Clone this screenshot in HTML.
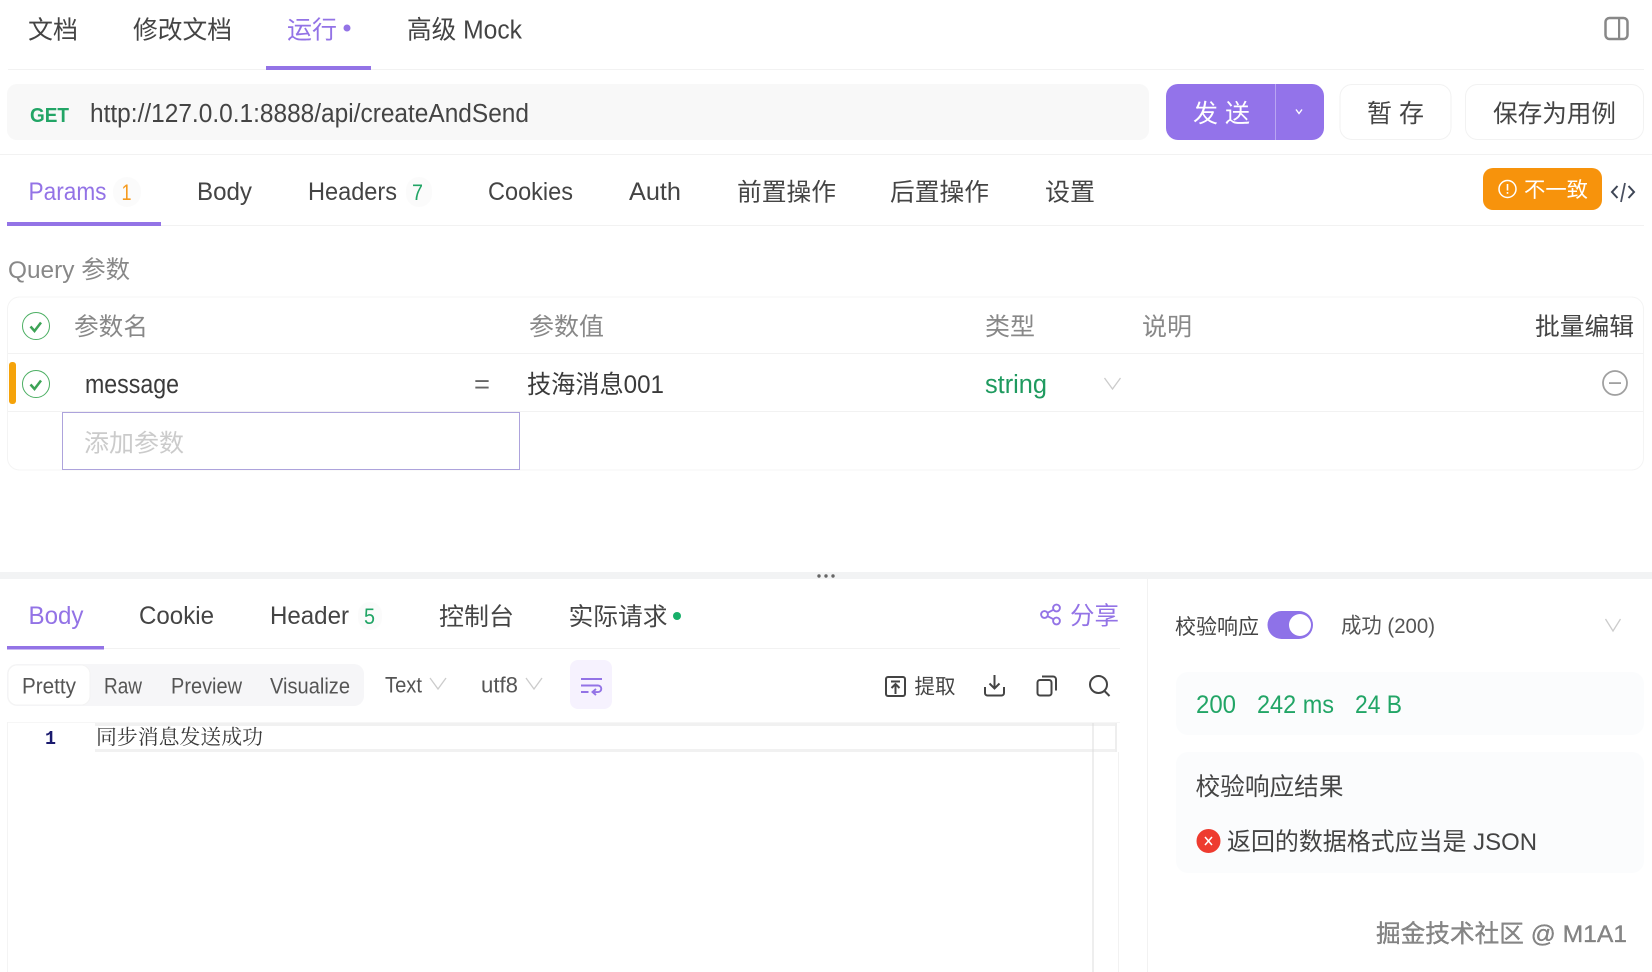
<!DOCTYPE html>
<html lang="zh"><head><meta charset="utf-8"><title>运行</title>
<style>
html,body{margin:0;padding:0;background:#fff;width:1652px;height:972px;overflow:hidden}
svg{display:block;position:absolute;left:0;top:0}
text{font-family:"Liberation Sans","Noto Sans CJK SC",sans-serif;fill:#444;white-space:pre}
.g{fill:#888}.p{fill:#9373e6}.gr{fill:#22a566}
</style></head><body>
<svg width="1652" height="972" viewBox="0 0 1652 972" xmlns="http://www.w3.org/2000/svg">
<rect width="1652" height="972" fill="#fff"/>

<!-- top tabs -->
<rect x="8" y="69" width="1636" height="1" fill="#f2f2f2"/>
<rect x="266" y="66" width="105" height="4" fill="#9373e6"/>
<g font-size="25">
<text x="28" y="38.500" textLength="50" lengthAdjust="spacingAndGlyphs">文档</text>
<text x="133" y="38.500" textLength="99" lengthAdjust="spacingAndGlyphs">修改文档</text>
<text x="287" y="38.500" textLength="50" lengthAdjust="spacingAndGlyphs" class="p">运行</text>
<text x="407" y="38.500" font-size="25.500" textLength="115" lengthAdjust="spacingAndGlyphs">高级 Mock</text>
</g>
<circle cx="347" cy="28" r="3.500" fill="#9373e6"/>
<rect x="1605.500" y="18" width="22" height="21" rx="4" fill="none" stroke="#888" stroke-width="2.500"/>
<rect x="1618" y="18" width="2.200" height="21" fill="#888"/>

<!-- url row -->
<rect x="7" y="84" width="1142" height="56" rx="10" fill="#f8f8f8"/>
<text x="30" y="122" font-size="20.500" font-weight="700" class="gr" textLength="39" lengthAdjust="spacingAndGlyphs">GET</text>
<text x="90" y="122" font-size="25.500" textLength="439" lengthAdjust="spacingAndGlyphs">http://127.0.0.1:8888/api/createAndSend</text>
<rect x="1166" y="84" width="158" height="56" rx="12" fill="#9373ea"/>
<rect x="1275" y="84" width="1" height="56" fill="#b9a5f2"/>
<text x="1193" y="122" font-size="25" style="fill:#fff" textLength="57" lengthAdjust="spacing">发 送</text>
<polyline points="1296,109.500 1299,113.500 1302,109.500" fill="none" stroke="#fff" stroke-width="1.400"/>
<rect x="1340" y="84.500" width="111" height="55" rx="12" fill="#fff" stroke="#f2f2f2"/>
<text x="1367" y="122" font-size="25" textLength="57" lengthAdjust="spacing">暂 存</text>
<rect x="1465.500" y="84.500" width="178" height="55" rx="12" fill="#fff" stroke="#f2f2f2"/>
<text x="1493" y="122" font-size="24.500" textLength="123" lengthAdjust="spacingAndGlyphs">保存为用例</text>
<rect x="0" y="154" width="1652" height="1" fill="#f2f2f2"/>

<!-- request tabs -->
<rect x="8" y="225" width="1636" height="1" fill="#f2f2f2"/>
<rect x="7" y="222" width="154" height="4" fill="#9373e6"/>
<rect x="113" y="177" width="28" height="30" rx="14" fill="#fbfbfb"/>
<rect x="406" y="177" width="26" height="30" rx="13" fill="#fbfbfb"/>
<g font-size="25">
<text x="28.500" y="200" textLength="78" lengthAdjust="spacingAndGlyphs" class="p">Params</text>
<text x="121.500" y="200" font-size="22" style="fill:#f59a1d" textLength="10" lengthAdjust="spacingAndGlyphs">1</text>
<text x="197" y="200" textLength="55" lengthAdjust="spacingAndGlyphs">Body</text>
<text x="308" y="200" textLength="89" lengthAdjust="spacingAndGlyphs">Headers</text>
<text x="412" y="200" font-size="22" class="gr" textLength="11" lengthAdjust="spacingAndGlyphs">7</text>
<text x="488" y="200" textLength="85" lengthAdjust="spacingAndGlyphs">Cookies</text>
<text x="629" y="200" textLength="52" lengthAdjust="spacingAndGlyphs">Auth</text>
<text x="737" y="200.500" font-size="24.500" textLength="99" lengthAdjust="spacingAndGlyphs">前置操作</text>
<text x="890" y="200.500" font-size="24.500" textLength="99" lengthAdjust="spacingAndGlyphs">后置操作</text>
<text x="1045" y="200.500" font-size="24.500" textLength="50" lengthAdjust="spacingAndGlyphs">设置</text>
</g>
<rect x="1483" y="168" width="119" height="42" rx="10" fill="#f7930c"/>
<circle cx="1507.500" cy="189" r="8.500" fill="none" stroke="#fff" stroke-width="1.500"/>
<rect x="1506.700" y="184" width="1.600" height="6.500" fill="#fff"/><rect x="1506.700" y="192" width="1.600" height="1.800" fill="#fff"/>
<text x="1524" y="197" font-size="21" style="fill:#fff" textLength="64" lengthAdjust="spacingAndGlyphs">不一致</text>
<path d="M1617.500 186l-5.500 6 5.500 6M1628.500 186l5.500 6-5.500 6" fill="none" stroke="#3d4555" stroke-width="2"/>
<path d="M1625 183l-4 19" fill="none" stroke="#4a5060" stroke-width="1.800"/>

<!-- query -->
<text x="8" y="278" font-size="24.500" class="g" textLength="122" lengthAdjust="spacingAndGlyphs">Query 参数</text>
<rect x="7.500" y="297" width="1636" height="173" rx="12" fill="#fff" stroke="#f4f4f4"/>
<rect x="8" y="353" width="1635" height="1" fill="#f2f2f2"/>
<rect x="8" y="411" width="1635" height="1" fill="#f2f2f2"/>
<circle cx="36" cy="326" r="13.500" fill="none" stroke="#4caf63" stroke-width="1"/>
<polyline points="30.500,326.500 34.500,331 41,322.500" fill="none" stroke="#3da356" stroke-width="2.500"/>
<g font-size="24.500">
<text x="74" y="335" class="g" textLength="74" lengthAdjust="spacingAndGlyphs">参数名</text>
<text x="529" y="335" class="g" textLength="75" lengthAdjust="spacingAndGlyphs">参数值</text>
<text x="985" y="335" class="g" textLength="50" lengthAdjust="spacingAndGlyphs">类型</text>
<text x="1142" y="335" class="g" textLength="50" lengthAdjust="spacingAndGlyphs">说明</text>
<text x="1535" y="335" textLength="99" lengthAdjust="spacingAndGlyphs">批量编辑</text>
</g>
<rect x="9" y="362" width="7" height="42" rx="3" fill="#f5a30a"/>
<circle cx="36" cy="384" r="13.500" fill="none" stroke="#4caf63" stroke-width="1"/>
<polyline points="30.500,384.500 34.500,389 41,380.500" fill="none" stroke="#3da356" stroke-width="2.500"/>
<g font-size="25.500">
<text x="85" y="393" style="fill:#3a3a3a" textLength="94" lengthAdjust="spacingAndGlyphs">message</text>
<text x="474" y="393" style="fill:#666" textLength="16" lengthAdjust="spacingAndGlyphs">=</text>
<text x="527" y="393" font-size="25" style="fill:#3a3a3a" textLength="137" lengthAdjust="spacingAndGlyphs">技海消息001</text>
<text x="985" y="393" style="fill:#1f9a5f" textLength="62" lengthAdjust="spacingAndGlyphs">string</text>
</g>
<polyline points="1104.500,378 1112.500,389 1120.500,378" fill="none" stroke="#ccc" stroke-width="1.300"/>
<circle cx="1615" cy="383" r="12" fill="none" stroke="#a0a0a0" stroke-width="1.800"/>
<rect x="1609" y="382.200" width="12" height="1.800" fill="#a0a0a0"/>
<rect x="62.500" y="412.500" width="457" height="57" fill="#fff" stroke="#ada3dc"/>
<text x="84" y="451.500" font-size="24.500" style="fill:#cbcbcb" textLength="100" lengthAdjust="spacingAndGlyphs">添加参数</text>

<!-- divider -->
<rect x="0" y="572" width="1652" height="7" fill="#f2f3f4"/>
<circle cx="819" cy="576" r="1.700" fill="#666"/><circle cx="826" cy="576" r="1.700" fill="#666"/><circle cx="833" cy="576" r="1.700" fill="#666"/>

<!-- response tabs -->
<rect x="8" y="648" width="1112" height="1" fill="#f2f2f2"/>
<rect x="7" y="646" width="97" height="3.500" fill="#9373e6"/>
<rect x="358" y="602" width="24" height="28" rx="12" fill="#fbfbfb"/>
<g font-size="25">
<text x="28.500" y="624" class="p" textLength="55" lengthAdjust="spacingAndGlyphs">Body</text>
<text x="139" y="624" textLength="75" lengthAdjust="spacingAndGlyphs">Cookie</text>
<text x="270" y="624" textLength="79" lengthAdjust="spacingAndGlyphs">Header</text>
<text x="364" y="624" font-size="22" class="gr" textLength="11" lengthAdjust="spacingAndGlyphs">5</text>
<text x="439" y="625" font-size="24.500" textLength="75" lengthAdjust="spacingAndGlyphs">控制台</text>
<text x="568.500" y="625" font-size="24.500" textLength="99" lengthAdjust="spacingAndGlyphs">实际请求</text>
<text x="1070" y="624" font-size="24.500" class="p" textLength="49" lengthAdjust="spacingAndGlyphs">分享</text>
</g>
<circle cx="677" cy="616" r="4" fill="#18b06a"/>
<g fill="none" stroke="#9373e6" stroke-width="1.900">
<circle cx="1056.500" cy="608" r="3.400"/><circle cx="1056.500" cy="621" r="3.400"/><circle cx="1044.500" cy="614.500" r="3.400"/>
<path d="M1047.600 612.800l5.800-3M1047.600 616.200l5.800 3"/>
</g>

<!-- toolbar -->
<rect x="7" y="664" width="357" height="42" rx="10" fill="#f6f6f8"/>
<rect x="8" y="665" width="82" height="40" rx="9" fill="#fff" stroke="#f3f3f3"/>
<g font-size="22">
<text x="22" y="693.500" textLength="54" lengthAdjust="spacingAndGlyphs" style="fill:#555">Pretty</text>
<text x="104" y="693.500" textLength="38" lengthAdjust="spacingAndGlyphs" style="fill:#555">Raw</text>
<text x="171" y="693.500" textLength="71" lengthAdjust="spacingAndGlyphs" style="fill:#555">Preview</text>
<text x="270" y="693.500" textLength="80" lengthAdjust="spacingAndGlyphs" style="fill:#555">Visualize</text>
<text x="385" y="692.500" textLength="37" lengthAdjust="spacingAndGlyphs" style="fill:#555">Text</text>
<text x="481" y="692.500" textLength="37" lengthAdjust="spacingAndGlyphs" style="fill:#555">utf8</text>
<text x="914.500" y="693.500" font-size="20.500" textLength="41" lengthAdjust="spacingAndGlyphs">提取</text>
</g>
<polyline points="430,678 438,689 446,678" fill="none" stroke="#ccc" stroke-width="1.300"/>
<polyline points="526,678 534,689 542,678" fill="none" stroke="#ccc" stroke-width="1.300"/>
<rect x="570" y="660" width="42" height="49" rx="8" fill="#f6f2fe"/>
<path d="M581 679h21M581 685.500h17a3.300 3.300 0 0 1 0 6.600h-4.500M581 692h7.500M596 689l-3.500 3 3.500 3" fill="none" stroke="#9373e6" stroke-width="1.900"/>
<g fill="none" stroke="#444" stroke-width="2">
<rect x="886" y="677" width="19" height="19" rx="2"/>
<path d="M891 681.500h9M895.500 694v-9M891.500 688l4-4 4 4"/>
<path d="M994.500 675v13M989.500 683.500l5 5 5-5M985 687v6a2.500 2.500 0 0 0 2.500 2.500h14a2.500 2.500 0 0 0 2.500-2.500v-6"/>
<rect x="1037.500" y="680" width="14" height="15.500" rx="2.500"/>
<path d="M1042 676.500h11a3 3 0 0 1 3 3v11"/>
<circle cx="1098.500" cy="684.500" r="8.500"/><path d="M1104.500 691l5 5"/>
</g>

<!-- code area -->
<rect x="7" y="722" width="1113" height="1" fill="#f6f6f6"/>
<rect x="7" y="722" width="1" height="250" fill="#f4f4f4"/>
<rect x="95" y="723" width="1021" height="3" fill="#f1f1f1"/>
<rect x="95" y="749" width="1021" height="3" fill="#f1f1f1"/>
<rect x="1115" y="723" width="2" height="29" fill="#eee"/>
<text x="45" y="744" font-size="19" font-weight="700" style="fill:#1a1a6e;font-family:'Liberation Mono',monospace" textLength="11" lengthAdjust="spacingAndGlyphs">1</text>
<text x="96" y="744" font-size="20.500" style="fill:#3a3a3a;font-family:'Noto Serif CJK SC',serif" textLength="167" lengthAdjust="spacingAndGlyphs">同步消息发送成功</text>
<rect x="1092.500" y="723" width="1" height="249" fill="#ddd"/>
<rect x="1118" y="752" width="1" height="220" fill="#f2f2f2"/>
<rect x="1147" y="579" width="1" height="393" fill="#f2f2f2"/>

<!-- right panel -->
<text x="1175" y="634" font-size="20.800" textLength="84" lengthAdjust="spacingAndGlyphs">校验响应</text>
<rect x="1267.500" y="611" width="45.500" height="28" rx="14" fill="#8e72e8"/>
<circle cx="1300" cy="625" r="11" fill="#fff"/>
<text x="1341" y="633" font-size="21.500" style="fill:#555" textLength="94" lengthAdjust="spacingAndGlyphs">成功 (200)</text>
<polyline points="1605.500,619 1613,631 1620.500,619" fill="none" stroke="#ccc" stroke-width="1.300"/>
<rect x="1176" y="672" width="468" height="63" rx="12" fill="#fbfcfd"/>
<g font-size="25" class="gr">
<text x="1196" y="713" class="gr" textLength="40" lengthAdjust="spacingAndGlyphs">200</text>
<text x="1257" y="713" class="gr" textLength="77" lengthAdjust="spacingAndGlyphs">242 ms</text>
<text x="1355" y="713" class="gr" textLength="47" lengthAdjust="spacingAndGlyphs">24 B</text>
</g>
<rect x="1176" y="752" width="468" height="121" rx="12" fill="#fbfcfd"/>
<text x="1195.500" y="795" font-size="24.500" textLength="148" lengthAdjust="spacingAndGlyphs">校验响应结果</text>
<circle cx="1208.500" cy="841" r="12" fill="#ee3b2f"/>
<path d="M1205 837l7 8M1212 837l-7 8" stroke="#fff" stroke-width="1.500" fill="none"/>
<text x="1227" y="850" font-size="24.500" textLength="310" lengthAdjust="spacingAndGlyphs">返回的数据格式应当是 JSON</text>

<!-- watermark -->
<text x="1376" y="942" font-size="24.500" textLength="251" lengthAdjust="spacingAndGlyphs" style="fill:#868686;stroke:#666;stroke-width:.25">掘金技术社区 @ M1A1</text>
</svg>
</body></html>
